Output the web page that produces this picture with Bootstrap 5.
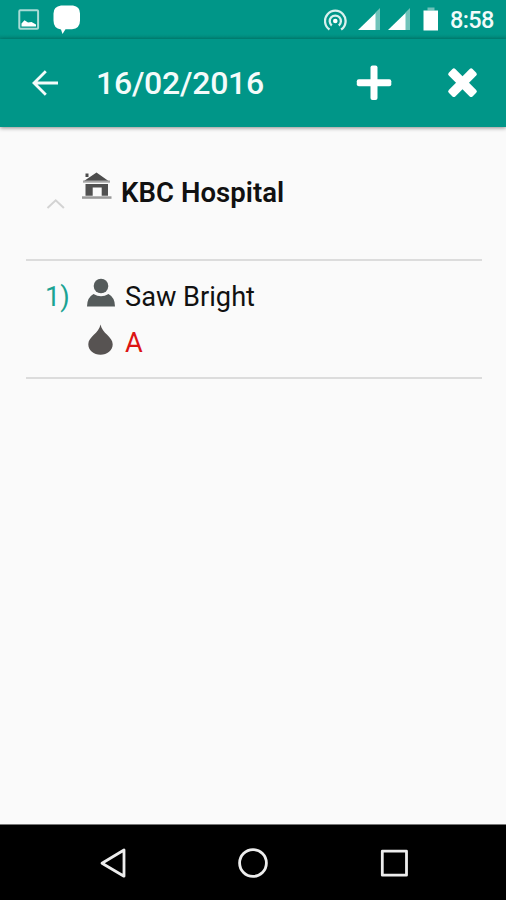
<!DOCTYPE html>
<html lang="en">
<head>
<meta charset="utf-8">
<meta name="viewport" content="width=device-width, initial-scale=1">
<title>16/02/2016</title>
<link href="https://cdn.jsdelivr.net/npm/bootstrap@5.3.0/dist/css/bootstrap.min.css" rel="stylesheet">
<style>
  body { font-family: Roboto, "Liberation Sans", sans-serif; background: #fafafa; color: #111; height: 900px; overflow: hidden; }
  svg { display: block; flex: none; }
  .status-strip { height: 39px; background: linear-gradient(#009688 0 34px, #008b7d 38px, #008b7d 39px); color: #f2fbfa; padding-right: 12px; padding-left: 18px; }
  .clock { font-size: 23.5px; font-weight: 500; line-height: 41px; height: 39px; width: 44px; letter-spacing: -.6px; white-space: nowrap; }
  .app-bar { height: 88px; background: #009688; color: #fff; box-shadow: 0 1px 4px rgba(0,0,0,.45); padding: 0 27px 0 29px; }
  .bar-title { font-size: 32px; font-weight: 500; line-height: 88px; letter-spacing: -.250px; margin: 0 auto 0 35px; color: #f4fbfa; }
  .content-area { padding: 0 24px 0 26px; }
  .place-row { height: 134px; border-bottom: 2px solid #dcdcdc; padding: 44px 0 0 20px; }
  .place-name { font-size: 27.500px; font-weight: 600; line-height: 40px; letter-spacing: .050px; margin: 2px 0 0 9px; }
  .donor-row { height: 118px; border-bottom: 2px solid #dcdcdc; padding: 13px 0 0 19px; font-size: 27.200px; }
  .donor-line { height: 46px; line-height: 46px; }
  .donor-no { width: 41px; color: #1ba393; }
  .donor-icon { width: 39px; }
  .blood { color: #dc1414; }
  .nav-keys { height: 76px; background: #000; border-top: 1px solid #777; }
</style>
<script src="https://cdn.jsdelivr.net/npm/bootstrap@5.3.0/dist/js/bootstrap.bundle.min.js"></script>
</head>
<body class="d-flex flex-column">
  <div class="status-strip d-flex align-items-center flex-shrink-0">
    <svg width="63" height="39" viewBox="18 0 63 39">
      <rect x="19.3" y="10.3" width="18.800" height="18.4" rx="1" fill="none" stroke="#a9dcd6" stroke-width="2"/>
      <path d="M21.500 26.500v-3l3-3.300 3.500 2.300 3.500-.500 4.500 2.500v2z" fill="#fff"/>
      <path d="M61 5.500h12q7 1 7 8v7q0 8-8 8.800h-6.500L62.500 34l-1.500-4.500q-7.500-1-7.500-9v-7q0-7 7.500-8z" fill="#fff"/>
    </svg>
    <svg class="ms-auto" width="126" height="39" viewBox="324 0 126 39">
      <g fill="none" stroke="#d9f1ee" stroke-width="2.300">
        <path d="M329.500 29.500a10.300 10.300 0 1 1 11.600 0"/>
        <path d="M331.800 25.500a5.600 5.600 0 1 1 7 0"/>
      </g>
      <circle cx="335.300" cy="21" r="2.300" fill="#fff"/>
      <path d="M380 8v22h-5V13z" fill="#70c3ba"/><path d="M375.500 13v17H358z" fill="#fff"/>
      <path d="M410 8v22h-5V13z" fill="#70c3ba"/><path d="M405.500 13v17H388z" fill="#fff"/>
      <path d="M427.500 7.500h7v3h-7z" fill="#70c3ba"/><path d="M423.500 10.500h14.500v20h-14.500z" fill="#fff"/>
    </svg>
    <span class="clock">8:58</span>
  </div>

  <header class="app-bar d-flex align-items-center flex-shrink-0">
    <svg width="32" height="32" viewBox="29 67 32 32" fill="none" stroke="#f4fbfa" stroke-width="2.800">
      <path d="M58 83H34M45.800 71.200L34 83l11.800 11.800"/>
    </svg>
    <h1 class="bar-title">16/02/2016</h1>
    <svg width="36" height="36" viewBox="356 65 36 36" fill="#fff">
      <rect x="370.500" y="65.500" width="7" height="34.500" rx="2"/>
      <rect x="356.800" y="79.300" width="34.500" height="7" rx="2"/>
    </svg>
    <svg class="ms-5" width="39" height="36" viewBox="440 65 39 36">
      <g transform="rotate(45 462.500 82.700)" fill="#fff">
        <rect x="457.900" y="65.900" width="9.200" height="33.600" rx="2"/>
        <rect x="445.700" y="78.100" width="33.600" height="9.200" rx="2"/>
      </g>
    </svg>
  </header>

  <main class="content-area flex-grow-1">
    <div class="place-row d-flex align-items-start">
      <svg width="66" height="44" viewBox="46 171 66 44">
        <path d="M47.500 208l8.200-7.700 8.200 7.700" fill="none" stroke="#d3d3d3" stroke-width="2"/>
        <path d="M85.500 173.500h3v3.500h-3zM96.500 172.500l12 8.500H84z" fill="#4c4c4c"/>
        <path d="M83 180.500h27v2.200H83z" fill="#a5a5a5"/>
        <path d="M85.500 184h22.500v11.800h-6.300v-8.300h-9v8.300h-7.200z" fill="#505050"/>
        <path d="M82 196.300h29.500v2.500H82z" fill="#999"/>
      </svg>
      <span class="place-name">KBC Hospital</span>
    </div>
    <div class="donor-row">
      <div class="donor-line d-flex">
        <span class="donor-no">1)</span>
        <span class="donor-icon">
          <svg width="30" height="34" viewBox="86 274 30 34" fill="#555b5b">
            <circle cx="101" cy="286" r="7.300"/>
            <path d="M87 306.500q0-9 6.500-12.500 7.500 4.500 15 0 6.500 3.500 6.500 12.500z"/>
          </svg>
        </span>
        <span>Saw Bright</span>
      </div>
      <div class="donor-line d-flex">
        <span class="donor-no"></span>
        <span class="donor-icon">
          <svg width="30" height="36" viewBox="86 320 30 36">
            <path d="M100.500 324.500c1.500 9 12.200 12 12.200 19.700 0 6.300-5.500 10.500-12.200 10.500S88.300 350.500 88.300 344.200c0-7.700 10.700-10.700 12.200-19.700z" fill="#575352"/>
          </svg>
        </span>
        <span class="blood">A</span>
      </div>
    </div>
  </main>

  <footer class="nav-keys flex-shrink-0">
    <svg width="506" height="75" viewBox="0 825 506 75" fill="none" stroke="#ededed" stroke-width="2.800" stroke-linejoin="round">
      <path d="M124 850v26.200L102 863.200z"/>
      <circle cx="253" cy="863" r="13.400"/>
      <rect x="382.300" y="851.200" width="24.200" height="24"/>
    </svg>
  </footer>
</body>
</html>
